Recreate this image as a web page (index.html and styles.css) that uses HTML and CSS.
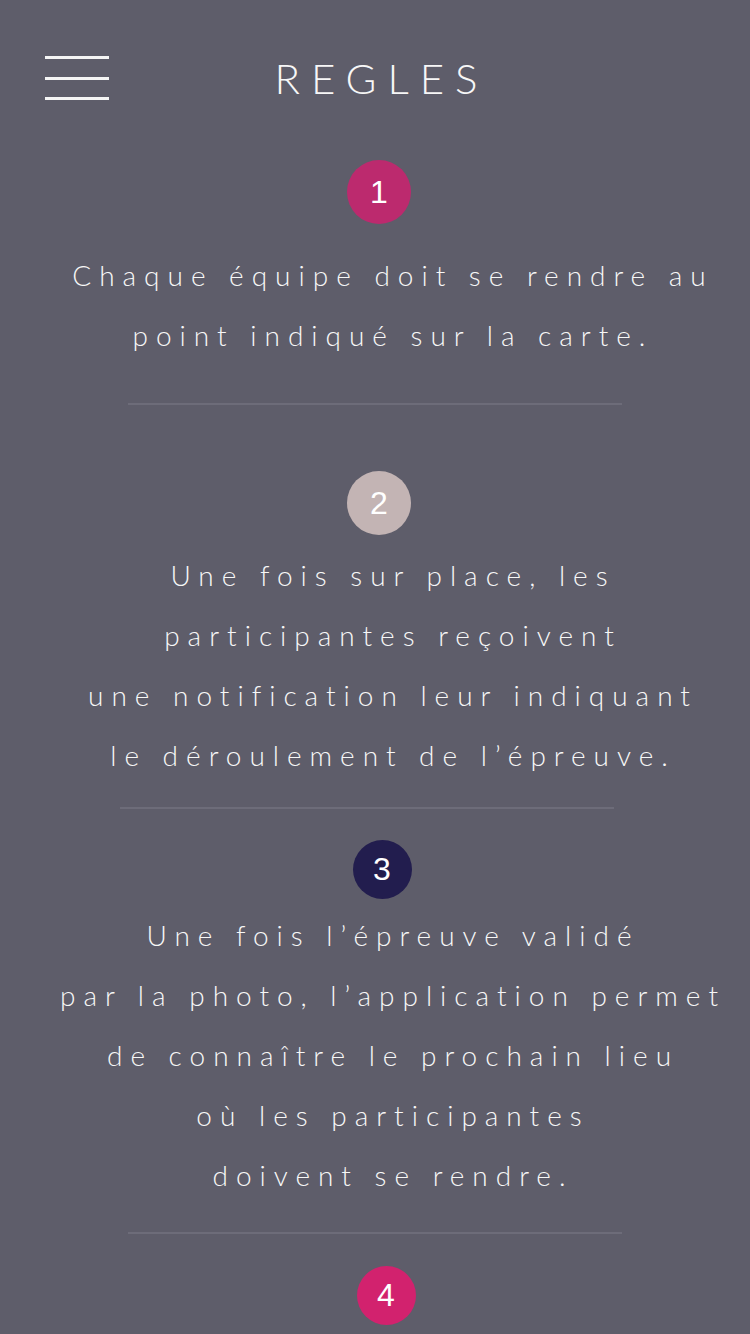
FILE: index.html
```html
<!DOCTYPE html>
<html lang="fr">
<head>
  <meta charset="UTF-8">
  <meta name="viewport" content="width=device-width, initial-scale=1.0">
  <title>Règles</title>
  <link rel="stylesheet" href="styles.css">
</head>
<body>
  <!-- En-tête : menu + titre -->
  <header class="top-bar">
    <button class="menu-btn" aria-label="Menu">
      <span></span><span></span><span></span>
    </button>
    <h1 class="page-title">REGLES</h1>
    <div class="top-bar-spacer"></div>
  </header>

  <!-- Liste des règles -->
  <main class="rules">
    <section class="rule rule-first">
      <div class="rule-num num-pink">1</div>
      <p class="rule-text">Chaque équipe doit se rendre au<br>point indiqué sur la carte.</p>
    </section>
    <hr class="rule-divider divider-first">

    <section class="rule rule-second">
      <div class="rule-num num-rose">2</div>
      <p class="rule-text">Une fois sur place, les<br>participantes reçoivent<br>une notification leur indiquant<br>le déroulement de l’épreuve.</p>
    </section>
    <hr class="rule-divider divider-second">

    <section class="rule rule-third">
      <div class="rule-num num-navy small">3</div>
      <p class="rule-text">Une fois l’épreuve validé<br>par la photo, l’application permet<br>de connaître le prochain lieu<br>où les participantes<br>doivent se rendre.</p>
    </section>
    <hr class="rule-divider divider-third">

    <section class="rule rule-fourth">
      <div class="rule-num num-magenta small">4</div>
    </section>
  </main>
</body>
</html>
```

FILE: styles.css
```css
/* Base */
* {
  margin: 0;
  padding: 0;
  box-sizing: border-box;
}
body {
  font-family: Lato, "Liberation Sans", sans-serif;
  background-color: #5e5d6a;
  color: #f7f7f7;
  min-height: 100vh;
  overflow: hidden;
}

/* En-tête */
.top-bar {
  display: grid;
  grid-template-columns: 64px 1fr 64px;
  align-items: center;
  padding: 56px 45px 0;
  height: 100px;
}
.menu-btn {
  display: flex;
  flex-direction: column;
  justify-content: space-between;
  width: 64px;
  height: 44px;
  background: none;
  border: none;
  cursor: pointer;
}
.menu-btn span {
  display: block;
  height: 3px;
  background-color: #f5f5f5;
}
.page-title {
  text-align: center;
  font-size: 42px;
  font-weight: 300;
  letter-spacing: 11px;
  padding-left: 13px;
  line-height: 44px;
}

/* Règles */
.rules {
  display: flex;
  flex-direction: column;
}
.rule {
  display: flex;
  flex-direction: column;
  align-items: center;
}
.rule-num {
  width: 64px;
  height: 64px;
  border-radius: 50%;
  margin-left: 8px;
  display: flex;
  align-items: center;
  justify-content: center;
  font-family: "Liberation Sans", Arial, sans-serif;
  font-size: 32px;
  color: #fff;
}
.rule-num.small {
  width: 59px;
  height: 59px;
}
.num-pink { background-color: #bc2a6e; }
.num-rose { background-color: #c3b4b4; }
.num-navy { background-color: #221d4e; margin-left: 14px; }
.num-magenta { background-color: #d2226e; margin-left: 22px; }

.rule-text {
  text-align: center;
  font-size: 28px;
  font-weight: 300;
  letter-spacing: 8px;
  line-height: 60px;
  padding-left: 36px;
}

/* Espacements propres à chaque bloc */
.rule-first { margin-top: 60px; }
.rule-first .rule-text { margin-top: 21px; }
.rule-second { margin-top: 66px; }
.rule-second .rule-text { margin-top: 10px; }
.rule-third { margin-top: 31px; }
.rule-third .rule-text { margin-top: 6px; }
.rule-fourth { margin-top: 32px; }

.rule-divider {
  border: none;
  height: 2px;
  width: 494px;
  margin: 0 auto;
  background-color: #6d6c79;
}
.divider-first { margin-top: 38px; }
.divider-second { margin-top: 22px; transform: translateX(-8px); }
.divider-third { margin-top: 27px; }
```
